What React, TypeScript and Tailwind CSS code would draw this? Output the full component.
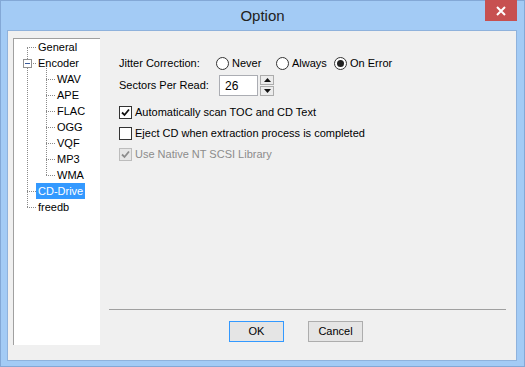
import { FC, ReactNode } from "react";

const font = { fontFamily: '"Liberation Sans", Arial, sans-serif' };

const Radio: FC<{ label: string; checked?: boolean; w: string }> = ({ label, checked, w }) => (
  <div className={`flex items-center gap-[3px] ${w}`}>
    <span className="w-[13px] h-[13px] rounded-full border border-[#333] bg-white flex items-center justify-center">
      {checked && <span className="w-[7px] h-[7px] rounded-full bg-[#222]" />}
    </span>
    <span>{label}</span>
  </div>
);

const Check: FC<{ label: string; checked?: boolean; disabled?: boolean }> = ({ label, checked, disabled }) => (
  <div className={`flex items-center gap-[3px] h-[13px] ${disabled ? "text-[#8c8c8c]" : ""}`}>
    <span
      className={`w-[13px] h-[13px] border flex items-center justify-center ${
        disabled ? "border-[#bcbcbc] bg-[#e6e6e6]" : "border-[#333] bg-white"
      }`}
    >
      {checked && (
        <svg width="9" height="9" viewBox="0 0 9 9">
          <path d="M1 4.5 L3.5 7 L8 1.5" fill="none" stroke={disabled ? "#8c8c8c" : "#111"} strokeWidth="1.8" />
        </svg>
      )}
    </span>
    <span className="whitespace-nowrap">{label}</span>
  </div>
);

const TreeRow: FC<{ children: ReactNode; indent: number; selected?: boolean; box?: boolean }> = ({
  children,
  indent,
  selected,
  box,
}) => (
  <div className="h-[16px] flex items-center relative whitespace-nowrap">
    <div className={indent === 0 ? "w-[13px] shrink-0" : "w-[32px] shrink-0"} />
    <div className="w-[9px] shrink-0 border-t border-dotted border-[#8a8a8a]" />
    {box && (
      <span className="absolute left-[9px] top-[4px] w-[9px] h-[9px] border border-[#919191] bg-white flex items-center justify-center">
        <span className="w-[5px] h-px bg-[#3a5a9a]" />
      </span>
    )}
    <span className={`px-[2px] leading-[16px] ${selected ? "bg-[#3399ff] text-white" : "text-black"}`}>{children}</span>
  </div>
);

export default function App() {
  return (
    <div className="w-[525px] h-[367px] bg-[#a3cbf5] border border-[#83a8d6] flex flex-col text-[11px] text-black" style={font}>
      <div className="h-[29px] flex items-start relative">
        <div className="flex-1 text-center text-[15px] text-[#222] pt-[4px]">Option</div>
        <div className="absolute right-[7px] top-[-1px] w-[32px] h-[21px] bg-[#c75050] flex items-center justify-center">
          <svg width="10" height="10" viewBox="0 0 10 10">
            <path d="M1 1 L9 9 M9 1 L1 9" stroke="#fff" strokeWidth="2" />
          </svg>
        </div>
      </div>
      <div className="ml-[6px] mr-[7px] h-[331px] bg-[#f0f0f0] border border-[#8fb2dc] flex">
        <div className="ml-[5px] mt-[7px] w-[87px] h-[307px] bg-white border-l border-t border-[#a0a0a0] relative">
          <div className="absolute left-[13px] top-[8px] h-[160px] border-l border-dotted border-[#8a8a8a]" />
          <div className="absolute left-[32px] top-[29px] h-[107px] border-l border-dotted border-[#8a8a8a]" />
          <div className="flex flex-col">
            <TreeRow indent={0}>General</TreeRow>
            <TreeRow indent={0} box>Encoder</TreeRow>
            {["WAV", "APE", "FLAC", "OGG", "VQF", "MP3", "WMA"].map((n) => (
              <TreeRow key={n} indent={1}>{n}</TreeRow>
            ))}
            <TreeRow indent={0} selected>CD-Drive</TreeRow>
            <TreeRow indent={0}>freedb</TreeRow>
          </div>
        </div>
        <div className="flex-1 flex flex-col pl-[9px] pr-[10px]">
          <div className="flex flex-col pl-[10px]">
            <div className="flex items-center mt-[25px] h-[14px]">
              <span className="w-[97px]">Jitter Correction:</span>
              <div className="flex items-center">
                <Radio label="Never" w="w-[60px]" />
                <Radio label="Always" w="w-[58px]" />
                <Radio label="On Error" checked w="w-[70px]" />
              </div>
            </div>
            <div className="flex items-center mt-[5px]">
              <span className="w-[100px]">Sectors Per Read:</span>
              <div className="w-[39px] h-[21px] bg-white border border-[#abadb3] pl-[5px] flex items-center text-[12px]">26</div>
              <div className="ml-[2px] w-[14px] h-[21px] flex flex-col">
                <div className="h-[10px] border border-[#acacac] bg-[#ececec] flex items-center justify-center">
                  <svg width="7" height="4" viewBox="0 0 7 4"><path d="M0 4 L3.5 0 L7 4Z" fill="#111" /></svg>
                </div>
                <div className="h-[10px] mt-[1px] border border-[#acacac] bg-[#ececec] flex items-center justify-center">
                  <svg width="7" height="4" viewBox="0 0 7 4"><path d="M0 0 L3.5 4 L7 0Z" fill="#111" /></svg>
                </div>
              </div>
            </div>
            <div className="flex flex-col gap-[8px] mt-[10px]">
              <Check label="Automatically scan TOC and CD Text" checked />
              <Check label="Eject CD when extraction process is completed" />
              <Check label="Use Native NT SCSI Library" checked disabled />
            </div>
          </div>
          <div className="flex-1" />
          <div className="border-t border-[#a0a0a0]" />
          <div className="flex gap-[24px] pt-[11px] pb-[18px] pl-[120px]">
            <div className="w-[55px] h-[21px] border border-[#3399ff] bg-[#e5e5e5] flex items-center justify-center">OK</div>
            <div className="w-[55px] h-[21px] border border-[#adadad] bg-[#e5e5e5] flex items-center justify-center">Cancel</div>
          </div>
        </div>
      </div>
    </div>
  );
}
